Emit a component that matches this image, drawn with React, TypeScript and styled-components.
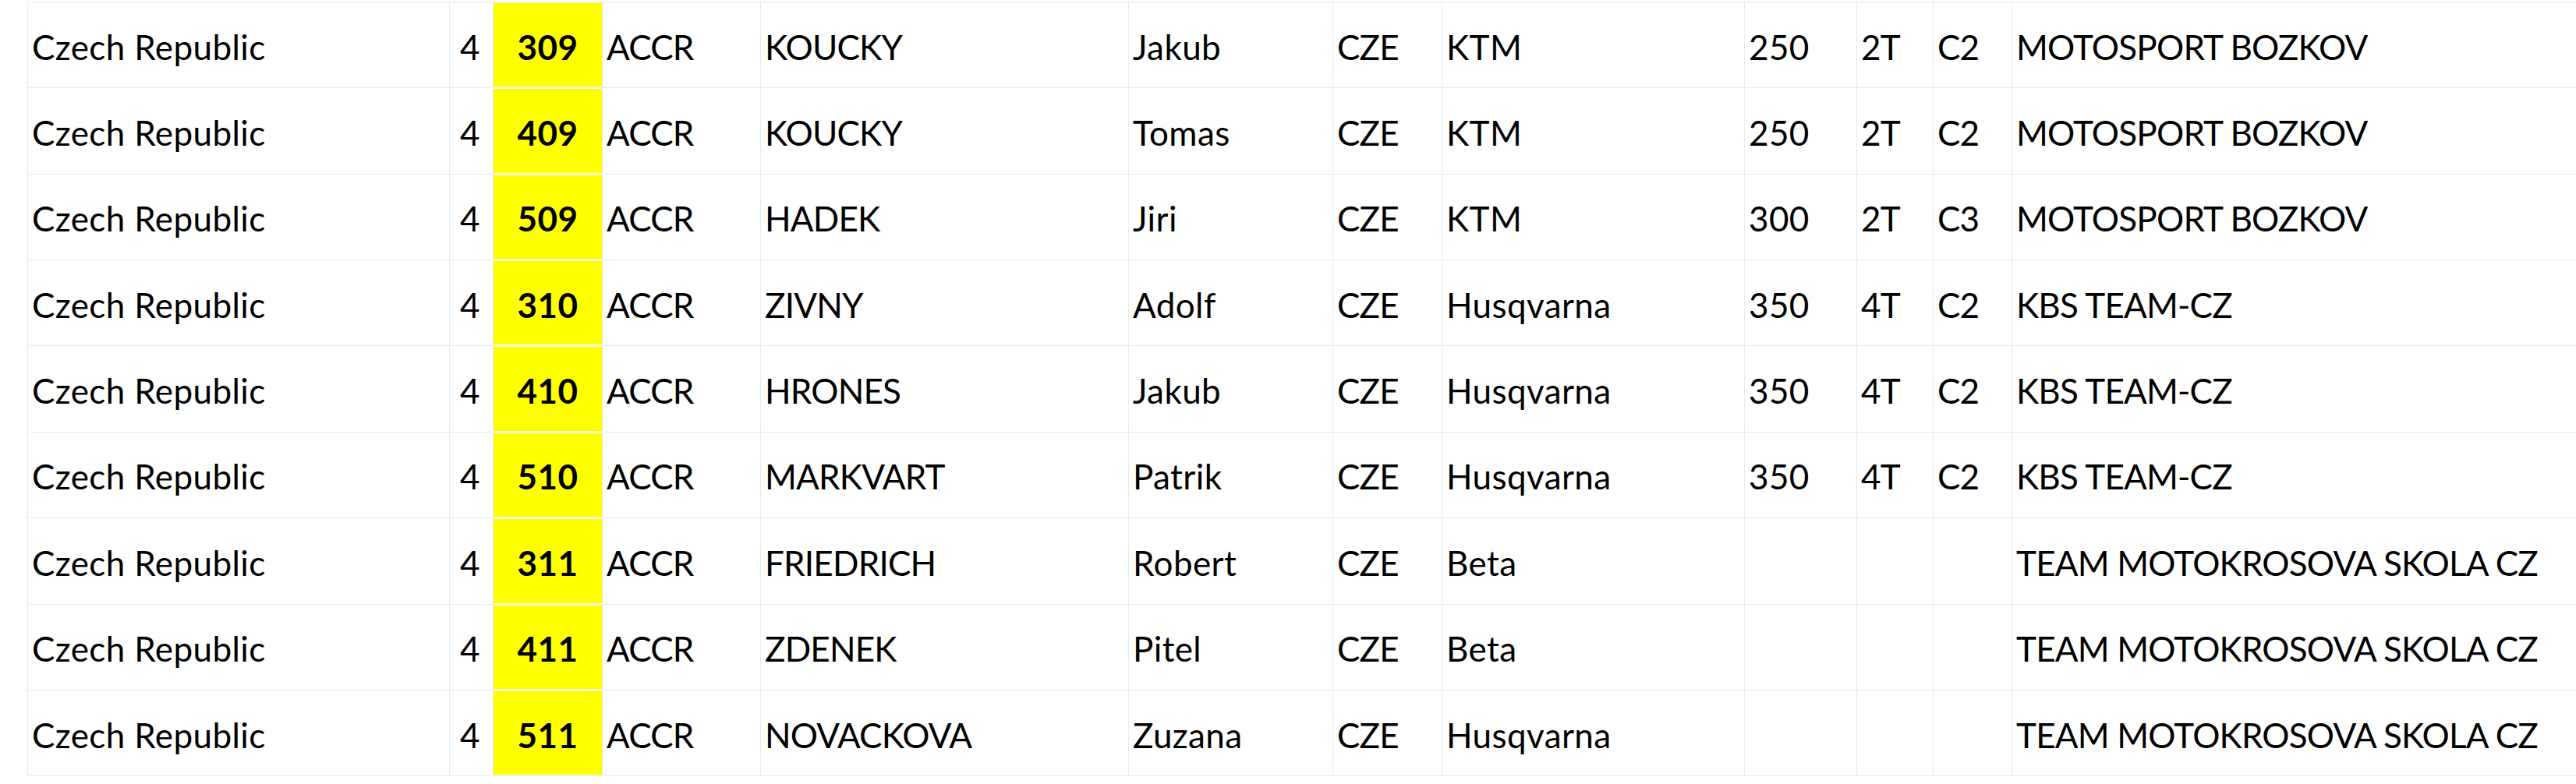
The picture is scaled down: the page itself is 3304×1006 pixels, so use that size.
import { FC } from 'react'
import styled, { createGlobalStyle } from 'styled-components'

const GlobalStyle = createGlobalStyle`
  html, body {
    margin: 0;
    padding: 0;
    background: #ffffff;
  }
  body {
    font-family: Lato, "Liberation Sans", sans-serif;
    color: #000000;
    overflow: hidden;
  }
`

const COLUMNS = '541px 56px 140px 203px 472px 262px 140px 388px 144px 98px 101px 800px'
const GRID = '#e6ecef'

const Sheet = styled.div`
  margin: 2px 0 0 35px;
  display: flex;
  flex-direction: column;
  width: max-content;
  border-top: 1px solid ${GRID};
`

const Row = styled.div`
  display: grid;
  grid-template-columns: ${COLUMNS};
  height: 110.37px;
  box-sizing: border-box;
  border-bottom: 1px solid ${GRID};
`

// $caps: all-capital text runs a bit narrower in the sheet's font
const Cell = styled.div<{ $align?: 'left' | 'right' | 'center'; $mark?: boolean; $caps?: boolean }>`
  display: flex;
  align-items: center;
  justify-content: ${p => p.$align === 'right' ? 'flex-end' : p.$align === 'center' ? 'center' : 'flex-start'};
  box-sizing: border-box;
  padding: 4px ${p => p.$align === 'right' ? '16px' : '0'} 0 ${p => p.$align === 'left' || !p.$align ? '5px' : '0'};
  border-left: 1px solid ${GRID};
  font-size: 44px;
  font-weight: ${p => p.$mark ? 700 : 400};
  letter-spacing: ${p => p.$caps ? '-0.8px' : '0.4px'};
  white-space: nowrap;
  overflow: hidden;
  background: ${p => p.$mark ? '#ffff00' : 'transparent'};
  box-shadow: ${p => p.$mark ? 'inset 0 1px 0 #fffbe0, inset 0 -1px 0 #fffbe0' : 'none'};
`

type Rider = {
  nr: string
  surname: string
  name: string
  brand: string
  ccm: string
  stroke: string
  cls: string
  team: string
}

const riders: Rider[] = [
  { nr: '309', surname: 'KOUCKY', name: 'Jakub', brand: 'KTM', ccm: '250', stroke: '2T', cls: 'C2', team: 'MOTOSPORT BOZKOV' },
  { nr: '409', surname: 'KOUCKY', name: 'Tomas', brand: 'KTM', ccm: '250', stroke: '2T', cls: 'C2', team: 'MOTOSPORT BOZKOV' },
  { nr: '509', surname: 'HADEK', name: 'Jiri', brand: 'KTM', ccm: '300', stroke: '2T', cls: 'C3', team: 'MOTOSPORT BOZKOV' },
  { nr: '310', surname: 'ZIVNY', name: 'Adolf', brand: 'Husqvarna', ccm: '350', stroke: '4T', cls: 'C2', team: 'KBS TEAM-CZ' },
  { nr: '410', surname: 'HRONES', name: 'Jakub', brand: 'Husqvarna', ccm: '350', stroke: '4T', cls: 'C2', team: 'KBS TEAM-CZ' },
  { nr: '510', surname: 'MARKVART', name: 'Patrik', brand: 'Husqvarna', ccm: '350', stroke: '4T', cls: 'C2', team: 'KBS TEAM-CZ' },
  { nr: '311', surname: 'FRIEDRICH', name: 'Robert', brand: 'Beta', ccm: '', stroke: '', cls: '', team: 'TEAM MOTOKROSOVA SKOLA CZ' },
  { nr: '411', surname: 'ZDENEK', name: 'Pitel', brand: 'Beta', ccm: '', stroke: '', cls: '', team: 'TEAM MOTOKROSOVA SKOLA CZ' },
  { nr: '511', surname: 'NOVACKOVA', name: 'Zuzana', brand: 'Husqvarna', ccm: '', stroke: '', cls: '', team: 'TEAM MOTOKROSOVA SKOLA CZ' },
]

const App: FC = () => {
  return (
    <>
      <GlobalStyle />
      <Sheet>
        {riders.map(r => (
          <Row key={r.nr}>
            <Cell>Czech Republic</Cell>
            <Cell $align="right">4</Cell>
            <Cell $align="center" $mark>{r.nr}</Cell>
            <Cell $caps>ACCR</Cell>
            <Cell $caps>{r.surname}</Cell>
            <Cell>{r.name}</Cell>
            <Cell $caps>CZE</Cell>
            <Cell>{r.brand}</Cell>
            <Cell>{r.ccm}</Cell>
            <Cell $caps>{r.stroke}</Cell>
            <Cell $caps>{r.cls}</Cell>
            <Cell $caps>{r.team}</Cell>
          </Row>
        ))}
      </Sheet>
    </>
  )
}

export default App
